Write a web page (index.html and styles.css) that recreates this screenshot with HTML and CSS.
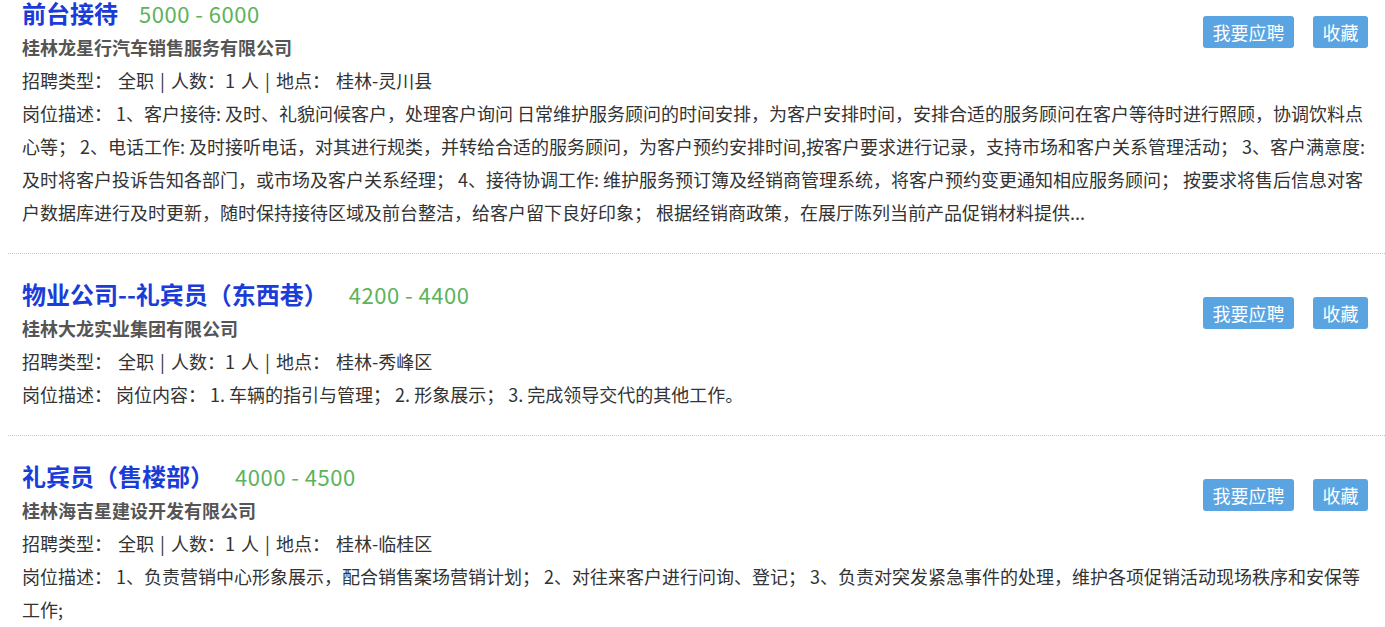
FILE: index.html
```html
<!DOCTYPE html>
<html lang="zh-CN">
<head>
    <meta charset="UTF-8">
    <meta name="viewport" content="width=device-width, initial-scale=1.0">
    <title>职位列表</title>
    <link rel="stylesheet" href="styles.css">
</head>
<body>
    <div class="job-list">
        <div class="job-item">
            <div class="job-actions">
                <button class="btn">我要应聘</button>
                <button class="btn">收藏</button>
            </div>
            <h2 class="job-title">前台接待<span class="salary">5000 - 6000</span></h2>
            <p class="company">桂林龙星行汽车销售服务有限公司</p>
            <p class="info">招聘类型： 全职 | 人数：1 人 | 地点： 桂林-灵川县</p>
            <p class="desc">岗位描述： 1、客户接待: 及时、礼貌问候客户，处理客户询问 日常维护服务顾问的时间安排，为客户安排时间，安排合适的服务顾问在客户等待时进行照顾，协调饮料点心等； 2、电话工作: 及时接听电话，对其进行规类，并转给合适的服务顾问，为客户预约安排时间,按客户要求进行记录，支持市场和客户关系管理活动； 3、客户满意度: 及时将客户投诉告知各部门，或市场及客户关系经理； 4、接待协调工作: 维护服务预订簿及经销商管理系统，将客户预约变更通知相应服务顾问； 按要求将售后信息对客户数据库进行及时更新，随时保持接待区域及前台整洁，给客户留下良好印象； 根据经销商政策，在展厅陈列当前产品促销材料提供...</p>
        </div>
        <div class="job-item">
            <div class="job-actions">
                <button class="btn">我要应聘</button>
                <button class="btn">收藏</button>
            </div>
            <h2 class="job-title">物业公司--礼宾员（东西巷）<span class="salary">4200 - 4400</span></h2>
            <p class="company">桂林大龙实业集团有限公司</p>
            <p class="info">招聘类型： 全职 | 人数：1 人 | 地点： 桂林-秀峰区</p>
            <p class="desc">岗位描述： 岗位内容： 1. 车辆的指引与管理； 2. 形象展示； 3. 完成领导交代的其他工作。</p>
        </div>
        <div class="job-item">
            <div class="job-actions">
                <button class="btn">我要应聘</button>
                <button class="btn">收藏</button>
            </div>
            <h2 class="job-title">礼宾员（售楼部）<span class="salary">4000 - 4500</span></h2>
            <p class="company">桂林海吉星建设开发有限公司</p>
            <p class="info">招聘类型： 全职 | 人数：1 人 | 地点： 桂林-临桂区</p>
            <p class="desc">岗位描述： 1、负责营销中心形象展示，配合销售案场营销计划； 2、对往来客户进行问询、登记； 3、负责对突发紧急事件的处理，维护各项促销活动现场秩序和安保等工作;</p>
        </div>
    </div>
</body>
</html>
```

FILE: styles.css
```css
body {
    margin: 0;
    padding: 0 0 0 8px;
    font-family: "Noto Sans CJK SC", "Liberation Sans", sans-serif;
    color: #333;
    background-color: #fff;
    overflow: hidden;
}
.job-list {
    margin-top: -27px;
}
.job-item {
    padding: 23px 17px 24px 14px;
    border-bottom: 1px dotted #c8c8c8;
}
.job-actions {
    float: right;
    margin-top: 20px;
    display: flex;
    gap: 19px;
}
.btn {
    height: 32px;
    padding: 0 9.5px;
    background-color: #5ba4e2;
    color: #fff;
    border: none;
    border-radius: 3px;
    font-family: inherit;
    font-size: 18px;
    line-height: 32px;
    cursor: pointer;
}
.btn:hover {
    background-color: #3f8fd4;
}
.job-title {
    margin: 0;
    font-size: 24px;
    line-height: 34px;
    font-weight: bold;
    color: #1a3cd8;
}
.salary {
    margin-left: 21px;
    font-size: 22px;
    letter-spacing: 0.5px;
    font-weight: normal;
    color: #5cb35c;
}
.company {
    margin: 0;
    font-size: 18px;
    line-height: 34px;
    font-weight: bold;
    color: #555;
}
.info,
.desc {
    margin: 0;
    font-size: 18px;
    line-height: 33px;
}
.info {
    word-spacing: 2px;
}
```
